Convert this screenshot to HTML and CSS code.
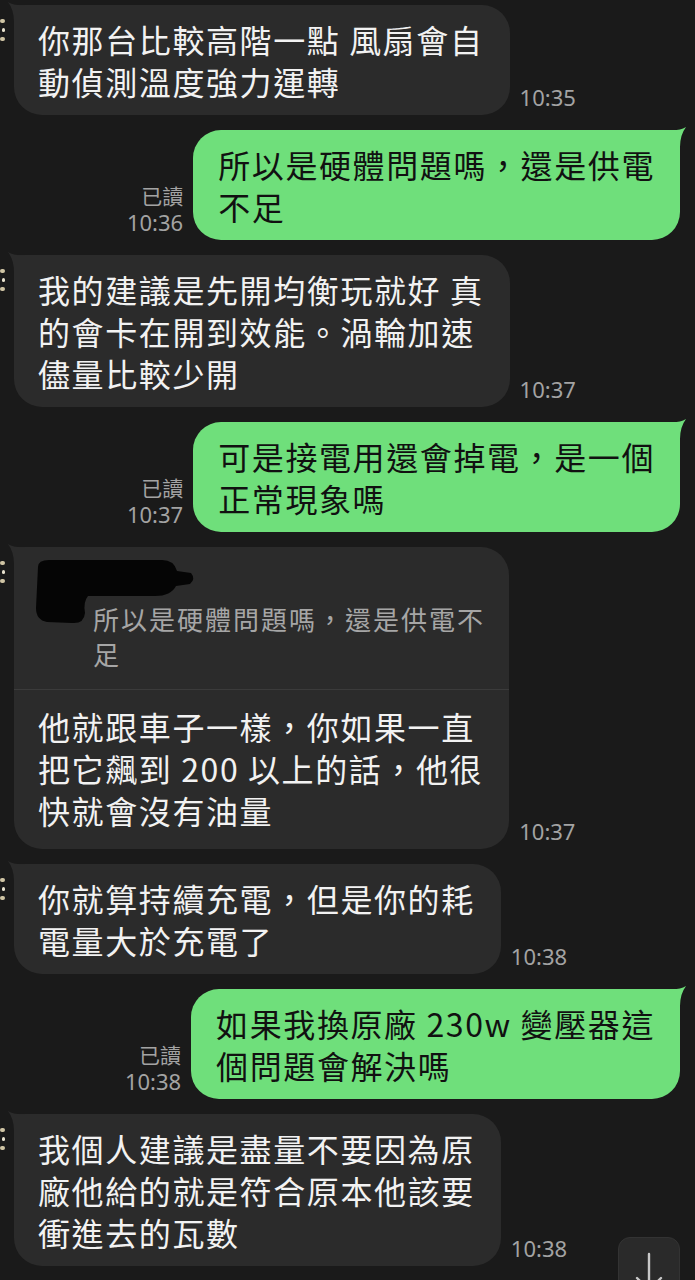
FILE: index.html
```html
<!DOCTYPE html>
<html>
<head>
    <title>聊天</title>
    <link rel="stylesheet" href="styles.css">
</head>
<body>
    <div class="chat">
        <div class="row in">
            <div class="avatar"><span></span><span></span><span></span></div>
            <div class="bubble">你那台比較高階一點 風扇會自<br>動偵測溫度強力運轉</div>
            <div class="meta"><span class="time">10:35</span></div>
        </div>

        <div class="row out">
            <div class="meta"><span class="read">已讀</span><span class="time">10:36</span></div>
            <div class="bubble">所以是硬體問題嗎，還是供電<br>不足</div>
        </div>

        <div class="row in">
            <div class="avatar"><span></span><span></span><span></span></div>
            <div class="bubble">我的建議是先開均衡玩就好 真<br>的會卡在開到效能。渦輪加速<br>儘量比較少開</div>
            <div class="meta"><span class="time">10:37</span></div>
        </div>

        <div class="row out">
            <div class="meta"><span class="read">已讀</span><span class="time">10:37</span></div>
            <div class="bubble">可是接電用還會掉電，是一個<br>正常現象嗎</div>
        </div>

        <div class="row in">
            <div class="avatar"><span></span><span></span><span></span></div>
            <div class="bubble reply">
                <div class="quote">
                    <svg class="redact" width="162" height="68" viewBox="0 0 162 68">
                        <path d="M4 9 Q4 2 15 2 L128 2 Q140 2 143 13 L157 15 Q162 21 156 26 L142 28 Q137 38 121 38 L54 38 Q49 44 51 55 Q50 66 38 65 L13 64 Q2 62 2 50 Z" fill="#050505"/>
                    </svg>
                    <div class="quote-text">所以是硬體問題嗎，還是供電不<br>足</div>
                </div>
                <div class="reply-body">他就跟車子一樣，你如果一直<br>把它飆到 200 以上的話，他很<br>快就會沒有油量</div>
            </div>
            <div class="meta"><span class="time">10:37</span></div>
        </div>

        <div class="row in">
            <div class="avatar"><span></span><span></span><span></span></div>
            <div class="bubble">你就算持續充電，但是你的耗<br>電量大於充電了</div>
            <div class="meta"><span class="time">10:38</span></div>
        </div>

        <div class="row out">
            <div class="meta"><span class="read">已讀</span><span class="time">10:38</span></div>
            <div class="bubble">如果我換原廠 230w 變壓器這<br>個問題會解決嗎</div>
        </div>

        <div class="row in">
            <div class="avatar"><span></span><span></span><span></span></div>
            <div class="bubble">我個人建議是盡量不要因為原<br>廠他給的就是符合原本他該要<br>衝進去的瓦數</div>
            <div class="meta"><span class="time">10:38</span></div>
        </div>
    </div>

    <div class="scroll-down">
        <svg width="30" height="40" viewBox="0 0 30 40">
            <path d="M15 2 L15 38 M3 26 L15 38 L27 26" fill="none" stroke="#c8c8c8" stroke-width="2.4" stroke-linecap="round" stroke-linejoin="round"/>
        </svg>
    </div>
</body>
</html>
```

FILE: styles.css
```css
html, body {
    margin: 0;
    height: 100%;
    overflow: hidden;
}

body {
    background: #1a1a1a;
    font-family: "Noto Sans CJK TC", "Noto Sans", sans-serif;
    position: relative;
}

.chat {
    display: flex;
    flex-direction: column;
    gap: 15px;
    padding-top: 5px;
}

.row {
    display: flex;
    align-items: flex-end;
}

.row.in {
    padding-right: 10px;
}

.row.out {
    justify-content: flex-end;
    padding-right: 15px;
}

/* cut-off avatar on the left edge */
.avatar {
    width: 8px;
    margin-right: 6px;
    align-self: flex-start;
    display: flex;
    flex-direction: column;
    gap: 5px;
    padding-top: 14px;
}

.avatar span {
    display: block;
    width: 5px;
    height: 4px;
    border-radius: 2px;
    background: #cfc4a4;
}

.avatar span:nth-child(2) {
    width: 3px;
    margin-left: 2px;
    background: #e8e2cf;
}

.bubble {
    position: relative;
    font-size: 32px;
    letter-spacing: 1.6px;
    line-height: 42px;
    padding: 13px 26px 13px 24px;
    border-radius: 28px;
    white-space: nowrap;
}

.in .bubble {
    background: #2b2b2b;
    color: #f2f2f2;
    border-top-left-radius: 0;
}

.in .bubble::before {
    content: "";
    position: absolute;
    top: -3px;
    left: -6px;
    width: 22px;
    height: 30px;
    background: #2b2b2b;
    clip-path: path('M22 3 L17 3 Q7 4 0 0 Q6 8 6 20 L6 30 L22 30 Z');
}

.out .bubble {
    background: #6fdf7b;
    color: #111;
    border-top-right-radius: 0;
    padding: 13px 25px;
}

.out .bubble::after {
    content: "";
    position: absolute;
    top: -3px;
    right: -6px;
    width: 22px;
    height: 30px;
    background: #6fdf7b;
    clip-path: path('M0 3 L5 3 Q15 4 22 0 Q16 8 16 20 L16 30 L0 30 Z');
}

.meta {
    display: flex;
    flex-direction: column;
    padding-bottom: 5px;
    color: #a3a3a3;
    font-size: 21px;
    line-height: 26px;
}

.in .meta {
    margin-left: 10px;
}

.out .meta {
    align-items: flex-end;
    margin-right: 10px;
}

.time {
    font-family: "Noto Sans", sans-serif;
    font-size: 22px;
}

.read {
    line-height: 27px;
}

.bubble.reply {
    padding: 0;
}

.quote {
    position: relative;
    padding: 54px 22px 18px 79px;
    border-bottom: 1px solid #3b3b3b;
}

.redact {
    position: absolute;
    left: 20px;
    top: 11px;
}

.quote-text {
    font-size: 26px;
    letter-spacing: 2px;
    line-height: 35px;
    color: #a6a6a6;
}

.reply-body {
    padding: 15px 26px 18px 24px;
}

.scroll-down {
    position: absolute;
    right: 15px;
    bottom: -12px;
    width: 62px;
    height: 55px;
    border-radius: 12px;
    background: #2a2a2a;
    border: 1px solid #333;
    display: flex;
    justify-content: center;
    padding-top: 14px;
    box-sizing: border-box;
}
```
